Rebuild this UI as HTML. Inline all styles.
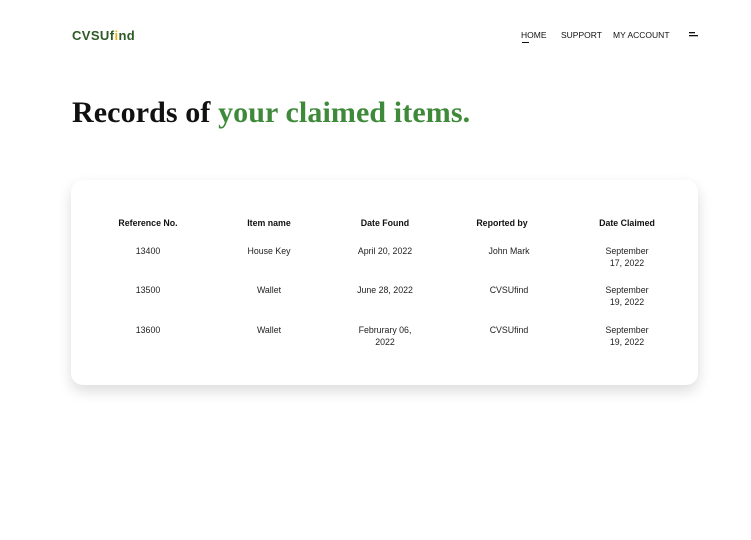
<!DOCTYPE html>
<html><head><meta charset="utf-8"><style>
*{margin:0;padding:0;box-sizing:border-box}
body{width:751px;height:540px;background:#fff;font-family:"Liberation Sans",sans-serif;position:relative;overflow:hidden;color:#111}
.logo{position:absolute;left:72px;top:28px;font-weight:bold;font-size:13px;color:#2e5a26;letter-spacing:0.4px}
.logo span{color:#e8b21c}
.nav{position:absolute;top:30px;font-size:8.5px;color:#111}
.ul{position:absolute;left:522px;top:42px;width:7px;height:1px;background:#111}
h1{position:absolute;left:72px;top:96px;font-family:"Liberation Serif",serif;font-weight:bold;font-size:30px;color:#111;letter-spacing:0.1px;white-space:nowrap}
h1 span{color:#3f8a3a}
.card{position:absolute;left:71px;top:180px;width:627px;height:205px;background:#fff;border-radius:12px;box-shadow:0 6px 14px rgba(0,0,0,0.14)}
.c{position:absolute;width:110px;text-align:center;font-size:8.8px;line-height:11.5px;color:#222}
.h{font-weight:bold;color:#111}
</style></head><body>
<div class="logo">CVSUf<span>i</span>nd</div>
<div class="nav" style="left:521px">HOME</div>
<div class="ul"></div>
<div class="nav" style="left:561px">SUPPORT</div>
<div class="nav" style="left:613px">MY ACCOUNT</div>
<svg style="position:absolute;left:689px;top:31px" width="10" height="8"><rect x="0" y="1" width="6" height="1.3" fill="#111"/><rect x="0" y="4" width="9" height="1.3" fill="#111"/></svg>
<h1>Records of <span>your claimed items.</span></h1>
<div class="card"></div>
<div class="c h" style="left:93px;top:218px">Reference No.</div>
<div class="c h" style="left:214px;top:218px">Item name</div>
<div class="c h" style="left:330px;top:218px">Date Found</div>
<div class="c h" style="left:447px;top:218px">Reported by</div>
<div class="c h" style="left:572px;top:218px">Date Claimed</div>

<div class="c" style="left:93px;top:246px">13400</div>
<div class="c" style="left:214px;top:246px">House Key</div>
<div class="c" style="left:330px;top:246px">April 20, 2022</div>
<div class="c" style="left:454px;top:246px">John Mark</div>
<div class="c" style="left:572px;top:246px">September<br>17, 2022</div>

<div class="c" style="left:93px;top:285px">13500</div>
<div class="c" style="left:214px;top:285px">Wallet</div>
<div class="c" style="left:330px;top:285px">June 28, 2022</div>
<div class="c" style="left:454px;top:285px">CVSUfind</div>
<div class="c" style="left:572px;top:285px">September<br>19, 2022</div>

<div class="c" style="left:93px;top:325px">13600</div>
<div class="c" style="left:214px;top:325px">Wallet</div>
<div class="c" style="left:330px;top:325px">Februrary 06,<br>2022</div>
<div class="c" style="left:454px;top:325px">CVSUfind</div>
<div class="c" style="left:572px;top:325px">September<br>19, 2022</div>
</body></html>
